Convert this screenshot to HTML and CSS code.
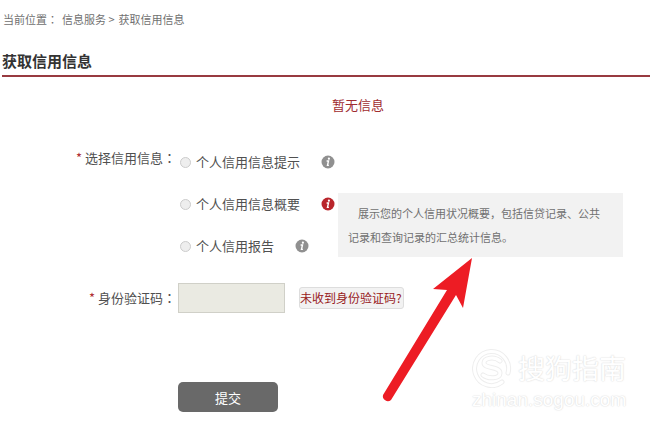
FILE: index.html
```html
<!DOCTYPE html>
<html lang="zh-CN">
<head>
<meta charset="utf-8">
<title>获取信用信息</title>
<link rel="stylesheet" href="styles.css">
</head>
<body>
<svg class="sprite" aria-hidden="true">
  <symbol id="info" viewBox="0 0 14 14">
    <circle cx="7" cy="7" r="6.5" fill="currentColor"/>
    <circle cx="7.9" cy="3.7" r="1.1" fill="#fff"/>
    <path d="M5.6 6h1.9L6.5 10.4h1.4" fill="none" stroke="#fff" stroke-width="1.4"/>
  </symbol>
</svg>

<nav class="crumbs"><span>当前位置<span class="colon" lang="zh-TW">：</span></span><span>信息服务 &gt;</span><span>获取信用信息</span></nav>
<h1 class="title">获取信用信息</h1>
<p class="notice">暂无信息</p>

<form class="form">
  <div class="row">
    <div class="label" id="type-label"><span class="star">*</span> 选择信用信息<span class="colon" lang="zh-TW">：</span></div>
    <div class="options" role="radiogroup" aria-labelledby="type-label">
      <div class="option">
        <input type="radio" name="type" id="type1"><label for="type1">个人信用信息提示</label>
        <svg class="info"><use href="#info"/></svg>
      </div>
      <div class="option">
        <input type="radio" name="type" id="type2"><label for="type2">个人信用信息概要</label>
        <svg class="info active"><use href="#info"/></svg>
        <div class="tip">展示您的个人信用状况概要，包括信贷记录、公共记录和查询记录的汇总统计信息。</div>
      </div>
      <div class="option">
        <input type="radio" name="type" id="type3"><label for="type3">个人信用报告</label>
        <svg class="info"><use href="#info"/></svg>
      </div>
    </div>
  </div>
  <div class="row code-row">
    <label class="label" for="code"><span class="star">*</span> 身份验证码<span class="colon" lang="zh-TW">：</span></label>
    <div class="code">
      <input type="text" id="code" class="code-input">
      <button type="button" class="resend">未收到身份验证码?</button>
    </div>
  </div>
  <div class="row submit-row">
    <button type="button" class="submit">提交</button>
  </div>
</form>

<svg class="arrow" viewBox="0 0 100 150" aria-hidden="true">
  <path d="M92 1L53 32L67 33L3 138A5 5 0 0 0 11 143L76 38L83 51Z" fill="#ed1c24"/>
</svg>

<div class="mark">
  <svg class="mark-logo" viewBox="0 0 40 40" aria-hidden="true">
    <g fill="none" stroke-linecap="round">
      <path d="M30 34A17 17 0 1 1 36 25M28 13C22 8 12 10 12 15C12 21 28 18 28 25C28 31 16 31 11 27" stroke="#eee" stroke-width="5"/>
      <path d="M30 34A17 17 0 1 1 36 25M28 13C22 8 12 10 12 15C12 21 28 18 28 25C28 31 16 31 11 27" stroke="#fff" stroke-width="3"/>
    </g>
  </svg>
  <span class="mark-name">搜狗指南</span>
  <span class="mark-url">zhinan.sogou.com</span>
</div>
</body>
</html>
```
FILE: styles.css
```css
body {
  margin: 0;
  background: #fff;
  color: #505050;
  font-family: "Noto Sans CJK SC", sans-serif;
  font-size: 13px;
  line-height: 20px;
}

input, button {
  font-family: inherit;
  margin: 0;
  padding: 0;
  box-sizing: border-box;
}

.sprite {
  position: absolute;
  width: 0;
  height: 0;
}

.crumbs {
  display: flex;
  gap: 4px;
  padding: 9px 3px 0;
  font-size: 11px;
  color: #707070;
}

/* centred colon */
.colon {
  font-family: "Noto Sans CJK TC", sans-serif;
}

.title {
  margin: 21px 0 0 2px;
  padding-bottom: 3px;
  border-bottom: 2px solid #983a40;
  font-size: 15px;
  line-height: 22px;
  font-weight: bold;
  color: #333;
}

.notice {
  margin: 18px 0 0 332px;
  color: #a02c30;
}

.form {
  margin-top: 33px;
}

.row {
  display: flex;
}

.label {
  box-sizing: border-box;
  width: 178px;
  padding-right: 2px;
  text-align: right;
}

.star {
  color: #b03035;
}

.options {
  display: flex;
  flex-direction: column;
  gap: 22px;
  padding: 4px 0 0 2px;
}

.option {
  display: flex;
  align-items: center;
  position: relative;
}

.option input {
  appearance: none;
  width: 11px;
  height: 11px;
  margin-right: 5px;
  border: 1px solid #ccc;
  border-radius: 50%;
  background: #eee;
}

.option input:checked {
  background: #888;
}

.info {
  width: 14px;
  height: 14px;
  margin-left: 21px;
  color: #909090;
}

.info.active {
  color: #b9252b;
}

.tip {
  position: absolute;
  left: 158px;
  top: -1px;
  box-sizing: border-box;
  width: 285px;
  padding: 8px 16px 8px 10px;
  background: #f2f2f2;
  color: #707070;
  font-size: 11px;
  line-height: 24px;
  text-indent: 10px;
}

.code-row {
  margin-top: 27px;
  align-items: center;
}

.code {
  display: flex;
  align-items: center;
  gap: 14px;
}

.code-input {
  width: 107px;
  height: 30px;
  border: 1px solid #d0d0c8;
  background: #eaeae2;
}

.resend {
  width: 105px;
  height: 22px;
  border: 1px solid #ddd;
  border-radius: 3px;
  background: #f2f2f2;
  color: #98201c;
  font-size: 12px;
  line-height: 20px;
  text-align: left;
  white-space: nowrap;
}

.submit-row {
  margin-top: 69px;
  padding-left: 178px;
}

.submit {
  width: 100px;
  height: 30px;
  border: 0;
  border-radius: 5px;
  background: #696969;
  color: #fff;
  font-size: 13px;
}

/* annotation arrow and watermark lie over the page */
.arrow {
  position: absolute;
  left: 380px;
  top: 257px;
  width: 100px;
  height: 150px;
}

.mark {
  position: absolute;
  left: 472px;
  top: 348px;
  display: grid;
  grid-template-columns: 38px auto;
  column-gap: 8px;
  align-items: center;
  color: #fff;
  text-shadow: 0 0 2px #ddd, 0 0 1px #ddd;
}

.mark-logo {
  width: 40px;
  height: 40px;
}

.mark-name {
  font-size: 27px;
  line-height: 40px;
}

.mark-url {
  grid-column: 1 / 3;
  font-family: "Liberation Sans", sans-serif;
  font-size: 19px;
  line-height: 24px;
}
```
